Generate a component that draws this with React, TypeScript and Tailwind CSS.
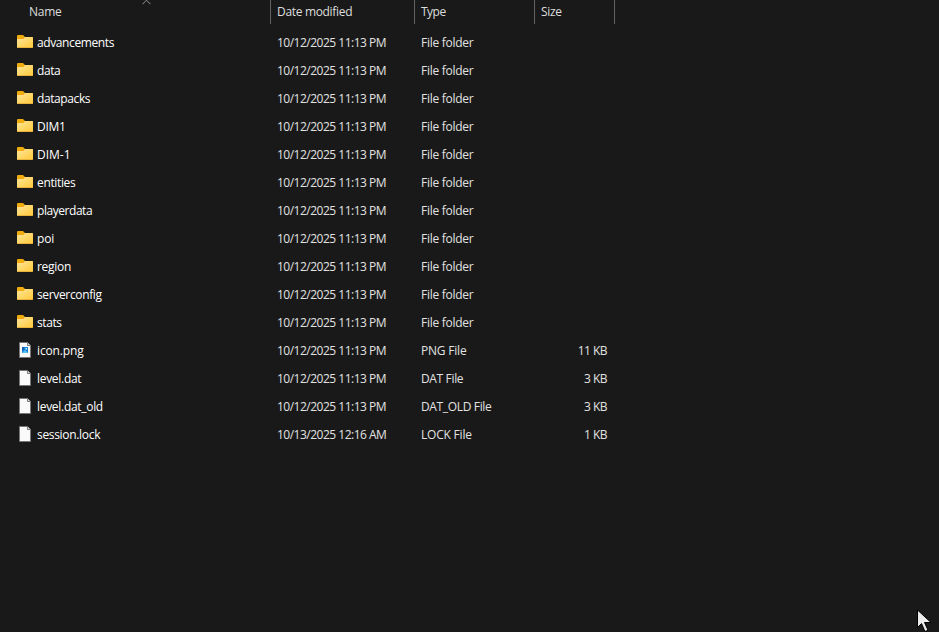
import clsx from 'clsx'

type Kind = 'folder' | 'image' | 'file'

interface Entry {
  name: string
  modified: string
  type: string
  size?: string
  kind: Kind
  nameTracking: string
  typeTracking: string
}

const folder = (name: string, nameTracking: string): Entry => ({
  name,
  modified: '10/12/2025 11:13 PM',
  type: 'File folder',
  kind: 'folder',
  nameTracking,
  typeTracking: 'tracking-[-0.27px]',
})

const entries: Entry[] = [
  folder('advancements', 'tracking-[-0.39px]'),
  folder('data', 'tracking-[-0.4px]'),
  folder('datapacks', 'tracking-[-0.4px]'),
  folder('DIM1', 'tracking-[-0.25px]'),
  folder('DIM-1', 'tracking-[0px]'),
  folder('entities', 'tracking-[-0.35px]'),
  folder('playerdata', 'tracking-[-0.45px]'),
  folder('poi', 'tracking-[-0.2px]'),
  folder('region', 'tracking-[-0.3px]'),
  folder('serverconfig', 'tracking-[-0.35px]'),
  folder('stats', 'tracking-[-0.4px]'),
  { name: 'icon.png', modified: '10/12/2025 11:13 PM', type: 'PNG File', size: '11 KB', kind: 'image', nameTracking: 'tracking-[-0.15px]', typeTracking: 'tracking-[-0.2px]' },
  { name: 'level.dat', modified: '10/12/2025 11:13 PM', type: 'DAT File', size: '3 KB', kind: 'file', nameTracking: 'tracking-[-0.3px]', typeTracking: 'tracking-[-0.35px]' },
  { name: 'level.dat_old', modified: '10/12/2025 11:13 PM', type: 'DAT_OLD File', size: '3 KB', kind: 'file', nameTracking: 'tracking-[-0.3px]', typeTracking: 'tracking-[-0.35px]' },
  { name: 'session.lock', modified: '10/13/2025 12:16 AM', type: 'LOCK File', size: '1 KB', kind: 'file', nameTracking: 'tracking-[-0.32px]', typeTracking: 'tracking-[-0.2px]' },
]

function FolderIcon() {
  return (
    <svg width="16" height="16" viewBox="0 0 16 16">
      <defs>
        <linearGradient id="folder-front" x1="0" y1="0" x2="1" y2="1">
          <stop offset="0" stopColor="#ffe69c" />
          <stop offset="1" stopColor="#ffc937" />
        </linearGradient>
      </defs>
      <path d="M0 2q0-1 1-1h5l2 2h7q1 0 1 1v4H0z" fill="#f0ab0e" />
      <path d="M0 5.5q0-.5 1-.5h5.5l1.5-2h7q1 0 1 .8V13q0 1-1 1H1q-1 0-1-1z" fill="url(#folder-front)" />
      <path d="M.5 13.5h15" stroke="#e9b23a" />
    </svg>
  )
}

function FileIcon({ image = false }: { image?: boolean }) {
  return (
    <svg width="16" height="16" viewBox="0 0 16 16">
      <path d="M2.5.5h8l3 3v12h-11z" fill="#fafafa" stroke="#777" />
      <path d="M10.5.5v3h3" fill="#dcdcdc" stroke="#777" />
      {image && (
        <>
          <path d="M5 5h6v6H5z" fill="#1683d8" />
          <path d="M5 11l3-3 3 3z" fill="#5cc3f5" />
          <path d="M5 5h2v3H5z" fill="#1260b8" />
          <path d="M8.5 6h1.5v1.5H8.5z" fill="#d4f1ff" />
        </>
      )}
    </svg>
  )
}

function Header() {
  return (
    <div className="flex h-6 text-[#dedede]">
      <div className="relative w-[271px] border-r border-[#636363] pl-[29px] pt-1 tracking-[-0.25px]">
        Name
        <svg className="absolute left-[142px] top-0" width="9" height="5" viewBox="0 0 9 5">
          <path d="M.5 4.2l4-4 4 4" fill="none" stroke="#9a9a9a" />
        </svg>
      </div>
      <div className="w-36 border-r border-[#636363] pl-1.5 pt-1 tracking-[-0.32px]">Date modified</div>
      <div className="w-[120px] border-r border-[#636363] pl-1.5 pt-1 tracking-[-0.5px]">Type</div>
      <div className="w-20 border-r border-[#636363] pl-1.5 pt-1 tracking-[-0.35px]">Size</div>
    </div>
  )
}

function Row({ entry }: { entry: Entry }) {
  return (
    <div className="flex h-7 items-center text-[#e2e2e2]">
      <div className="flex w-[277px] items-center gap-1 pl-[17px]">
        <div className="pb-0.5">
          {entry.kind === 'folder' ? <FolderIcon /> : <FileIcon image={entry.kind === 'image'} />}
        </div>
        <span className={clsx('text-white', entry.nameTracking)}>{entry.name}</span>
      </div>
      <div className="w-36 tracking-[-0.5px]">{entry.modified}</div>
      <div className={clsx('w-[106px]', entry.typeTracking)}>{entry.type}</div>
      <div className="w-20 text-right tracking-[-0.55px]">{entry.size}</div>
    </div>
  )
}

export default function App() {
  return (
    <div className="relative h-[632px] w-[939px] cursor-default overflow-hidden whitespace-nowrap bg-[#191919] font-['Open_Sans',sans-serif] text-[12px] leading-4">
      <Header />
      <div className="pt-[5px]">
        {entries.map((entry) => (
          <Row key={entry.name} entry={entry} />
        ))}
      </div>
      <svg className="absolute left-[917px] top-[609px]" width="17" height="24" viewBox="0 0 17 24">
        <path d="M.5 1v17.5l4-4 3.5 8 3-1.3-3.5-7.7H14z" fill="#ececec" stroke="#000" />
      </svg>
    </div>
  )
}
